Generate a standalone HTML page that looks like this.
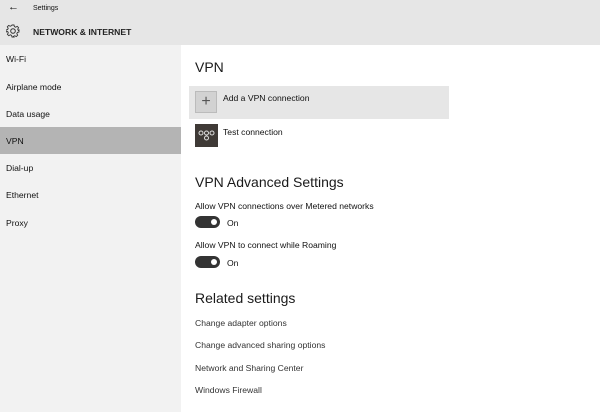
<!DOCTYPE html><html><head><style>
*{margin:0;padding:0;box-sizing:border-box}
body{width:600px;height:412px;overflow:hidden;background:#fff;font-family:"Liberation Sans",sans-serif;color:#111;position:relative}
.a{position:absolute;white-space:nowrap}
.s{font-size:8.6px}
.h{font-size:14px;color:#1a1a1a}
.tg{position:absolute;width:25px;height:12px;border-radius:6px;background:#333}
.tg:after{content:"";position:absolute;right:3px;top:3px;width:6px;height:6px;border-radius:50%;background:#fff}
</style></head><body>
<div class="a" style="left:0;top:0;width:600px;height:45px;background:#e6e6e6"></div>
<div class="a" style="left:8px;top:1px;font-size:11px">&#8592;</div>
<div class="a" style="left:33px;top:5px;font-size:7px">Settings</div>
<svg class="a" style="left:6px;top:24px" width="14" height="14" viewBox="0 0 14 14"><circle cx="7" cy="7" r="2.3" fill="none" stroke="#333" stroke-width="1"/><path d="M6 1h2l.4 1.6 1.3.6 1.5-.9 1.4 1.4-.9 1.5.6 1.3L13 6v2l-1.6.4-.6 1.3.9 1.5-1.4 1.4-1.5-.9-1.3.6L8 13H6l-.4-1.6-1.3-.6-1.5.9-1.4-1.4.9-1.5-.6-1.3L0 8V6l1.6-.4.6-1.3-.9-1.5 1.4-1.4 1.5.9 1.3-.6z" fill="none" stroke="#333" stroke-width="0.9"/></svg>
<div class="a" style="left:33px;top:27px;font-size:8.6px;font-weight:bold;color:#222">NETWORK &amp; INTERNET</div>
<div class="a" style="left:0;top:45px;width:181px;height:367px;background:#f2f2f2"></div>
<div class="a" style="left:0;top:127px;width:181px;height:27px;background:#b4b4b4"></div>
<div class="a s" style="left:6px;top:54px">Wi-Fi</div>
<div class="a s" style="left:6px;top:82px">Airplane mode</div>
<div class="a s" style="left:6px;top:109px">Data usage</div>
<div class="a s" style="left:6px;top:136px">VPN</div>
<div class="a s" style="left:6px;top:163px">Dial-up</div>
<div class="a s" style="left:6px;top:190px">Ethernet</div>
<div class="a s" style="left:6px;top:218px">Proxy</div>
<div class="a h" style="left:195px;top:59px">VPN</div>
<div class="a" style="left:189px;top:86px;width:260px;height:33px;background:#e6e6e6"></div>
<div class="a" style="left:195px;top:91px;width:22px;height:22px;background:#d2d2d2;border:1px solid #bbb;text-align:center;line-height:20px;font-size:16px;color:#555">+</div>
<div class="a s" style="left:223px;top:93px">Add a VPN connection</div>
<div class="a" style="left:195px;top:124px;width:23px;height:23px;background:#3f3a36"></div>
<svg class="a" style="left:195px;top:124px" width="23" height="23" viewBox="0 0 23 23"><g fill="none" stroke="#ddd" stroke-width="1"><circle cx="6" cy="9" r="2"/><circle cx="11.5" cy="9" r="2"/><circle cx="17" cy="9" r="2"/><circle cx="11.5" cy="14" r="2"/></g></svg>
<div class="a s" style="left:223px;top:127px">Test connection</div>
<div class="a h" style="left:195px;top:174px">VPN Advanced Settings</div>
<div class="a s" style="left:195px;top:201px">Allow VPN connections over Metered networks</div>
<div class="tg" style="left:195px;top:216px"></div>
<div class="a s" style="left:227px;top:218px">On</div>
<div class="a s" style="left:195px;top:240px">Allow VPN to connect while Roaming</div>
<div class="tg" style="left:195px;top:256px"></div>
<div class="a s" style="left:227px;top:258px">On</div>
<div class="a h" style="left:195px;top:290px">Related settings</div>
<div class="a s" style="left:195px;top:318px;color:#333">Change adapter options</div>
<div class="a s" style="left:195px;top:340px;color:#333">Change advanced sharing options</div>
<div class="a s" style="left:195px;top:363px;color:#333">Network and Sharing Center</div>
<div class="a s" style="left:195px;top:385px;color:#333">Windows Firewall</div>
</body></html>
